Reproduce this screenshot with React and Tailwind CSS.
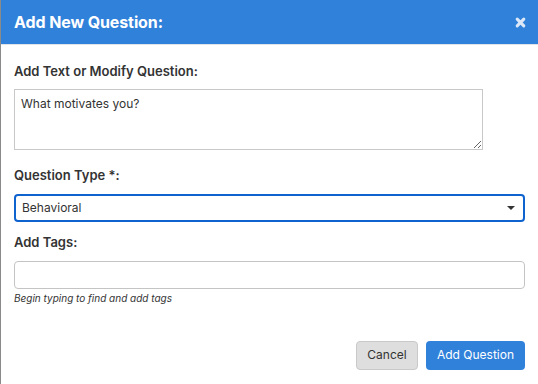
export default function App() {
  return (
    <div className="h-[384px] w-[538px] bg-white border-l border-[#8a8a8a] font-['Inter',sans-serif] overflow-hidden">
      {/* Header */}
      <div className="h-[45px] bg-[#3081da] border-b border-[#dfe3e8] flex items-center justify-between pl-[13px] pr-[12px]">
        <h2 className="text-[16px] font-bold text-white tracking-[-0.1px]">Add New Question:</h2>
        <svg className="h-[11px] w-[11px] text-[#dce8f7]" viewBox="0 0 10 10" fill="none" stroke="currentColor" strokeWidth={2.8} strokeLinecap="round">
          <path d="M2 2l6 6M8 2L2 8" />
        </svg>
      </div>

      {/* Body */}
      <div className="px-[13px] pt-[17px]">
        <label className="block text-[13px] font-semibold text-[#333] mb-[7px]">Add Text or Modify Question:</label>
        <textarea
          defaultValue="What motivates you?"
          className="block w-[469px] h-[61px] border border-[#c8c8c8] px-[6px] py-[5px] text-[12px] text-[#333] outline-none"
        />

        <label className="block text-[13px] font-semibold text-[#333] mt-[16px] mb-[9px]">Question Type *:</label>
        <div className="relative w-[511px] h-[28px] border-2 border-[#0f63cf] rounded-[4px] flex items-center px-[6px]">
          <span className="text-[12px] text-[#333]">Behavioral</span>
          <svg className="absolute right-[8px] top-[10px] h-[4px] w-[8px]" viewBox="0 0 8 4">
            <path d="M0 0h8L4 4z" fill="#333" />
          </svg>
        </div>

        <label className="block text-[13px] font-semibold text-[#333] mt-[11px] mb-[8px]">Add Tags:</label>
        <input className="block w-[511px] h-[28px] border border-[#c4c4c4] rounded-[4px] px-[6px] text-[12px] outline-none" />
        <p className="mt-[2px] text-[10px] italic text-[#333]">Begin typing to find and add tags</p>

        <div className="flex justify-end gap-[8px] mt-[35px] w-[511px]">
          <button className="h-[29px] w-[62px] rounded-[4px] bg-[#dedede] border border-[#c9c9c9] text-[12px] text-[#333]">Cancel</button>
          <button className="h-[29px] w-[99px] rounded-[4px] bg-[#3081da] text-[12px] text-white">Add Question</button>
        </div>
      </div>
    </div>
  );
}
